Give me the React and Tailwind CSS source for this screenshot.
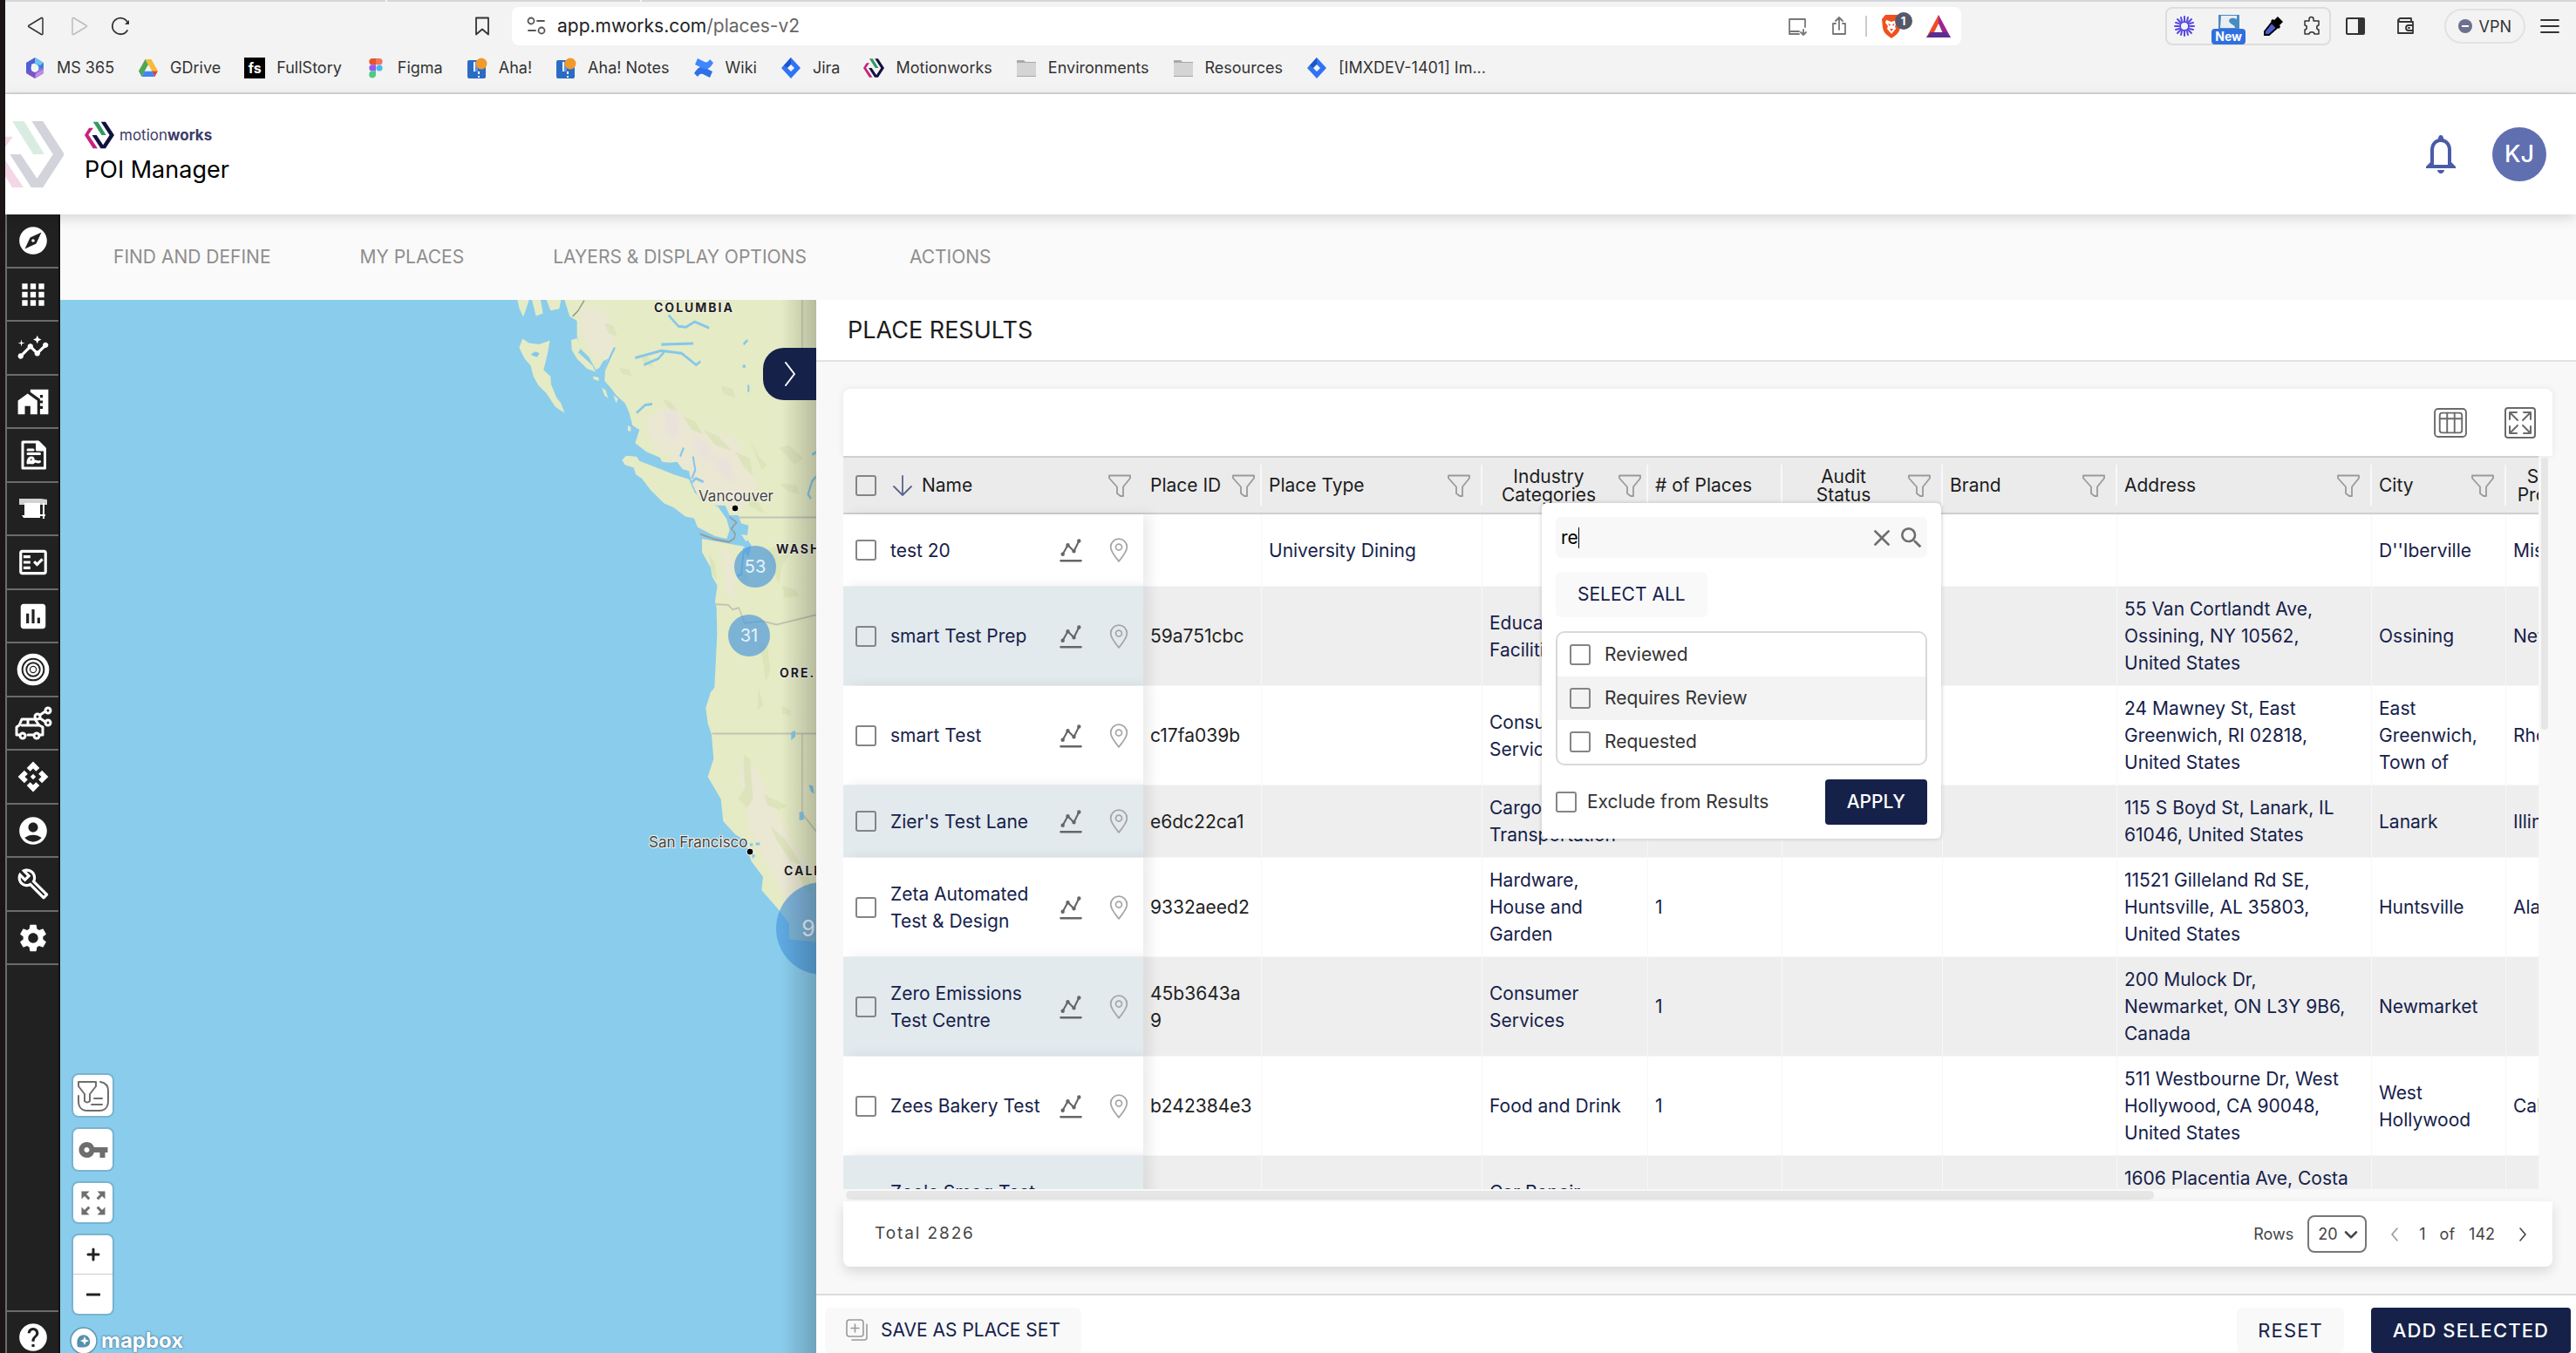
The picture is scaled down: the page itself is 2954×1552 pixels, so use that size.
import React from 'react'
import {
  MdExplore, MdApps, MdInsights, MdHomeWork, MdOutlineFactCheck, MdAssessment,
  MdApi, MdAccountCircle, MdOutlineBuild, MdSettings, MdHelp, MdVpnKey,
  MdSearch, MdClose, MdZoomOutMap,
} from 'react-icons/md'

const Logo = ({ className }) => (
  <svg viewBox="-27 418 248 224" className={className}>
    <path fill="#c8237c" d="M10 470h36L5 527l77 115H44L-27 530z" />
    <path fill="#339b62" d="M44 418h40l69 112h-38z" />
    <path fill="#121240" d="M110 418h38l73 112-73 112h-40L36 530h37l55 82 54-82z" />
  </svg>
)

const Ms365 = () => (
  <svg viewBox="0 0 24 24" className="size-6">
    <path fill="#3d7fe0" d="M12 0l10 6v6l-7 3V9l-5-3z" />
    <path fill="#6fc3f2" d="M12 0l10 6-4 3-8-3z" />
    <path fill="#7b52c8" d="M12 24L2 18l5-4 5 3 10-5v6z" />
    <path fill="#4f5fd6" d="M12 0L2 6v12l6-3V8l4-2z" />
    <path fill="#c08be8" d="M12 24l10-6v-5l-9 5z" />
    <circle cx="12" cy="12" r="4.5" fill="#f3f3f3" />
  </svg>
)

const Drive = () => (
  <svg viewBox="0 0 24 24" className="size-6">
    <path fill="#f5ba3a" d="M8.500 2h7L23 15.500h-7z" />
    <path fill="#e5432d" d="M16 15.500h7l-3.500 6.500z" />
    <path fill="#4fa653" d="M8.500 2L12 8.500 4.500 22 1 15.500z" />
    <path fill="#4285f4" d="M8 15.500h8.500L19.500 22h-15z" />
    <path fill="#f3f3f3" d="M12 8.500l4 7H8z" />
  </svg>
)

const FullStory = () => (
  <span className="grid size-6 place-items-center bg-black text-[16px] font-bold leading-none text-white">fs</span>
)

const FigmaIcon = () => (
  <svg viewBox="0 0 24 24" className="size-6">
    <path fill="#e8542a" d="M8 1h4v7.300H8A3.650 3.650 0 018 1z" />
    <path fill="#f0765f" d="M12 1h4a3.650 3.650 0 010 7.300h-4z" />
    <path fill="#9a58f2" d="M8 8.300h4v7.300H8a3.650 3.650 0 010-7.300z" />
    <circle cx="16" cy="12" r="3.600" fill="#45b8f5" />
    <path fill="#4ccb80" d="M8 15.600h4v4a3.900 3.900 0 11-4-4z" />
  </svg>
)

const Aha = () => (
  <svg viewBox="0 0 24 24" className="size-6">
    <rect x="1" y="3" width="21" height="21" rx="2" fill="#2a6cc4" />
    <path stroke="#fff" strokeWidth="2" d="M9 5v11M14 16v3M14 21v2" />
    <path fill="#5b95dc" d="M10 5h3v11h-3z" />
    <circle cx="17" cy="7" r="6.500" fill="#f09a2c" />
  </svg>
)

const Confluence = () => (
  <svg viewBox="0 0 24 24" className="size-6">
    <path fill="#2f6fe8" d="M1 18c4-7 8-9 13-6l8 4-3 7-8-4c-3-1-4 0-6 3z" />
    <path fill="#3f86ff" d="M23 6c-4 7-8 9-13 6L2 8l3-7 8 4c3 1 4 0 6-3z" />
  </svg>
)

const JiraIcon = () => (
  <svg viewBox="0 0 24 24" className="size-6">
    <path fill="#2f74f5" d="M12 0l11 12-11 12L1 12z" />
    <path fill="#1c55cc" d="M12 0v8l-4 4-4-3z" />
    <path fill="#f3f3f3" d="M12 8l4 4-4 4-4-4z" />
  </svg>
)

const Folder = () => (
  <svg viewBox="0 0 24 24" className="size-6">
    <path fill="#a9a9a9" d="M1 3h8l2 2h12v17H1z" />
    <rect x="1" y="6" width="22" height="15" rx="1" fill="#d4d4d4" />
  </svg>
)

const MotionIcon = () => <Logo className="h-6 w-6" />

const bookmarks = [
  ['MS 365', Ms365],
  ['GDrive', Drive],
  ['FullStory', FullStory],
  ['Figma', FigmaIcon],
  ['Aha!', Aha],
  ['Aha! Notes', Aha],
  ['Wiki', Confluence],
  ['Jira', JiraIcon],
  ['Motionworks', MotionIcon],
  ['Environments', Folder],
  ['Resources', Folder],
  ['[IMXDEV-1401] Im...', JiraIcon],
]

const Line = ({ className, children, vb = '0 0 24 24', w = 1.5 }) => (
  <svg viewBox={vb} className={className} fill="none" stroke="currentColor" strokeWidth={w} strokeLinecap="round" strokeLinejoin="round">
    {children}
  </svg>
)

const BrowserBar = () => (
  <div className="border-b-2 border-[#d6d6d6] bg-[#f3f3f3] text-[#333]">
    <div className="flex h-0.5">
      <div className="w-[436px] bg-[#d3d7dc]" />
      <div className="ml-0.5 w-[290px] bg-[#d3d7dc]" />
      <div className="ml-0.5 flex-1 bg-[#d3d7dc]" />
    </div>
    <div className="flex h-14 items-center pl-6 pr-[18px]">
      <button aria-label="Back"><Line className="size-6"><path d="M19 3.500v17a1 1 0 01-1.500 1L3.500 13a1 1 0 010-2L17.500 2.500a1 1 0 011.500 1z" /></Line></button>
      <button aria-label="Forward" className="ml-6 text-[#bdbdbd]"><Line className="size-6"><path d="M5 3.500v17a1 1 0 001.500 1L20.500 13a1 1 0 000-2L6.500 2.500a1 1 0 00-1.500 1z" /></Line></button>
      <button aria-label="Reload" className="ml-6">
        <Line className="size-6" w={1.8}><path d="M20 17a9.300 9.300 0 111-8" /><path d="M22 5v5h-5z" fill="currentColor" stroke="none" /></Line>
      </button>
      <button aria-label="Bookmark" className="ml-[391px]"><Line className="size-6" w={1.8}><path d="M5 2.500h14v19l-7-6-7 6z" /></Line></button>
      <div className="ml-[22px] flex h-[44px] flex-1 items-center rounded-lg bg-white pl-4 pr-3">
        <Line className="size-6 text-[#555]" w={1.8}><circle cx="6" cy="6" r="3.500" /><path d="M13 6h8M3 17h8" /><circle cx="18" cy="17" r="3.500" /></Line>
        <div className="ml-3 flex-1 text-[21px] text-[#222]">app.mworks.com<span className="text-[#666]">/places-v2</span></div>
        <div className="flex items-center text-[#777]">
          <button aria-label="Install"><Line className="size-6" w={1.8}><path d="M21 13V4H3v14h11M3 18v3h11M19 16v6M16 19l3 3 3-3" /></Line></button>
          <button aria-label="Share" className="ml-6"><Line className="size-6" w={1.8}><path d="M8 9H5v12h14V9h-3M12 16V2M8 6l4-4 4 4" /></Line></button>
          <div className="ml-[18px] h-6 w-0.5 bg-[#ccc]" />
          <button aria-label="Shields" className="relative ml-4 h-7 w-6">
            <svg viewBox="0 0 24 28" className="h-7 w-6">
              <path fill="#f0501e" d="M5 1h14l4 5-1 10c-1 6-6 9-10 12C8 25 3 22 2 16L1 6z" />
              <path fill="#fff" d="M6 7l6 2 6-2 1 3-3 4 1 3-5 6-5-6 1-3-3-4z" />
              <path fill="#f0501e" d="M8 11l3 1-1 2zM16 11l-3 1 1 2zM10 17h4l-2 3z" />
            </svg>
            <span className="absolute -right-3 -top-0.5 grid size-5 place-items-center rounded-full bg-[#55586a] text-[13px] font-bold leading-none text-white">1</span>
          </button>
          <button aria-label="Rewards" className="ml-7">
            <svg viewBox="0 0 28 26" className="h-7 w-7">
              <path fill="#f04a28" d="M14 0L0 26h6l8-16z" />
              <path fill="#a0238f" d="M14 0l14 26h-7L14 10z" />
              <path fill="#5a2d91" d="M0 26l5-6h18l5 6z" />
            </svg>
          </button>
        </div>
      </div>
      <div className="ml-[234px] flex h-[44px] w-[190px] items-center justify-between rounded-lg border-2 border-[#ddd] pl-2 pr-2">
        <svg viewBox="0 0 24 24" className="size-6" stroke="#5848e0" strokeWidth="2" strokeLinecap="round" fill="none">
          <circle cx="12" cy="12" r="5" />
          <path d="M12 1v5M12 18v5M1 12h5M18 12h5M4 4l4 4M16 16l4 4M20 4l-4 4M4 20l4-4M8 2l1 4M16 2l-1 4M8 22l1-4M16 22l-1-4M2 8l4 1M22 8l-4 1M2 16l4-1M22 16l-4-1" />
        </svg>
        <div className="mt-2 flex flex-col items-center">
          <svg viewBox="0 0 24 16" className="h-4 w-6"><path fill="#4a8cc0" d="M0 0h24v16H0z" /><path fill="#e9eef2" d="M3 1h18v4c-6-3-11 0-8 4 3 3 6 3 6 6H2z" /></svg>
          <span className="rounded-sm bg-[#2f6fdf] px-1 text-[14px] font-bold leading-[18px] text-white">New</span>
        </div>
        <svg viewBox="0 0 24 24" className="size-6"><path d="M17 1l6 6-4 4 1 2-2 2-9-9 2-2 2 1z" /><path stroke="#000" strokeWidth="2" fill="#4f5fd0" d="M10 8l6 6-9 8H2v-4z" /></svg>
        <Line className="size-6"><path d="M4 6h5V4a2.500 2.500 0 015 0v2h6v5c-3 0-3 5 0 5v5h-5c0-3-6-3-6 0H4v-5c3 0 3-5 0-5z" /></Line>
      </div>
      <button aria-label="Side panel" className="ml-4"><Line className="size-6" w={2}><rect x="2" y="3" width="20" height="18" rx="1" /><path d="M16 4h5v16h-5z" fill="currentColor" /></Line></button>
      <button aria-label="Wallet" className="ml-[34px]"><Line className="size-6" w={1.8}><path d="M3 5v15h17V7H5L3 5l2-2h13v4M20 11h-5a2.500 2.500 0 000 6h5zM15 14h1" /></Line></button>
      <button className="ml-8 flex h-10 items-center gap-2 rounded-full border-2 border-[#e2e2e2] px-3.5 text-[18px]">
        <svg viewBox="0 0 16 16" className="size-4"><circle cx="8" cy="8" r="8" fill="#6e7090" /><path d="M4 8h8" stroke="#fff" strokeWidth="2" /></svg>
        VPN
      </button>
      <button aria-label="Menu" className="ml-4"><Line className="size-6" w={1.8}><path d="M2 5h20M2 12h20M2 19h20" /></Line></button>
    </div>
    <div className="flex h-12 items-start gap-[27px] pl-[22px] pt-2">
      {bookmarks.map(([name, Icon]) => (
        <a key={name} href="#" className="flex items-center gap-[13px] text-[18px] leading-6">
          <Icon />
          {name}
        </a>
      ))}
    </div>
  </div>
)

const Header = () => (
  <header className="relative z-10 flex h-[138px] items-center bg-white shadow-[0_4px_14px_rgba(0,0,0,0.15)]">
    <div className="h-[76px] w-[67px] overflow-hidden opacity-[0.18]">
      <Logo className="-ml-4 h-[76px] w-[84px]" />
    </div>
    <div className="ml-6 pb-0.5">
      <div className="flex items-center gap-1.5">
        <Logo className="h-8 w-[34px]" />
        <span className="text-[17px] leading-8 text-[#3c3c68]">motion<b>works</b></span>
      </div>
      <h1 className="mt-1.5 text-[27px] leading-9 text-black">POI Manager</h1>
    </div>
    <button aria-label="Notifications" className="ml-auto text-[#4a5ca8]">
      <svg viewBox="0 0 36 44" className="h-[44px] w-9" fill="currentColor">
        <path d="M18 0c2 0 3 2 3 4 6 2 9 7 9 13v14l5 5v2H1v-2l5-5V17C6 11 9 6 15 4c0-2 1-4 3-4zm0 8c-5 0-8 4-8 9v17h16V17c0-5-3-9-8-9zM14 40h8c0 2-2 4-4 4s-4-2-4-4z" />
      </svg>
    </button>
    <div className="ml-[41px] mr-[34px] grid size-[62px] place-items-center rounded-full bg-[#5f6fb0] text-[27px] font-medium text-white">KJ</div>
  </header>
)

const ReportIcon = () => (
  <Line className="size-9" w={2}>
    <path d="M4 2h12l5 5v15H4z" /><path d="M15 2v6h6" fill="currentColor" /><path d="M8 8h4M8 11h9M8 18c0-5 5-5 4-2s-5 2-3 0c2 3 3 2 4 1s2 1 4 0" />
  </Line>
)
const BillboardIcon = () => (
  <svg viewBox="0 0 36 30" className="h-8 w-9" fill="currentColor">
    <path d="M2 3h25l7 1v6H2z" opacity="0.8" /><path d="M8 8h18v17H8z" /><path d="M29 8h2v18h-2zM5 22h4v3H7zM26 21h6v2h-6z" />
  </svg>
)
const TargetIcon = () => (
  <Line className="size-10" w={1.6}>
    <circle cx="12" cy="12" r="9.500" strokeWidth="3" /><circle cx="12" cy="12" r="6" /><circle cx="12" cy="12" r="3.300" /><circle cx="12" cy="12" r="1" fill="currentColor" />
  </Line>
)
const CarShareIcon = () => (
  <Line className="h-10 w-11" vb="0 0 44 40" w={3}>
    <path d="M3 33V24l3-2 3-7h15l5 7 4 2v9h-4M9 22h19M16 15v7M16 33h6M3 33h3" />
    <circle cx="10" cy="34" r="3" /><circle cx="26" cy="34" r="3" />
    <circle cx="27" cy="12" r="3" /><circle cx="39" cy="5" r="3" /><circle cx="39" cy="19" r="3" /><path d="M30 10l6-4M30 14l6 4" />
  </Line>
)

const sideItems = [
  ['Explore', MdExplore], ['Apps', MdApps], ['Insights', MdInsights], ['Places', MdHomeWork],
  ['Reports', ReportIcon], ['Billboards', BillboardIcon], ['Checks', MdOutlineFactCheck], ['Metrics', MdAssessment],
  ['Targets', TargetIcon], ['Traffic', CarShareIcon], ['API', MdApi], ['Account', MdAccountCircle],
  ['Tools', MdOutlineBuild], ['Settings', MdSettings],
]

const Sidebar = () => (
  <aside className="flex w-[63px] shrink-0 flex-col border-l-2 border-r-2 border-l-[#6b6b6b] border-r-[#111] bg-[#212121] text-white">
    <div className="flex h-[861px] flex-col">
      {sideItems.map(([name, Icon]) => (
        <button key={name} aria-label={name} className="grid flex-1 place-items-center border-b-2 border-[#6b6b6b] pt-px text-[38px]">
          <Icon />
        </button>
      ))}
    </div>
    <button aria-label="Help" className="mt-auto grid h-[49px] place-items-center border-t-2 border-[#6b6b6b] pt-2.5 text-[38px]">
      <MdHelp />
    </button>
  </aside>
)

const MapDrawing = () => (
  <svg viewBox="0 0 867 1208" preserveAspectRatio="xMaxYMin slice" className="absolute inset-0 h-full w-full" fontFamily="Inter, sans-serif">
    <defs>
      <linearGradient id="edge" x1="0" x2="1">
        <stop offset="0" stopOpacity="0" />
        <stop offset="1" stopOpacity="0.2" />
      </linearGradient>
      <filter id="soft"><feGaussianBlur stdDeviation="7" /></filter>
      <clipPath id="land"><path d="M262 8L280 45 305 55 305 90 320 120 345 135 370 165 382 160 395 145 412 140 402 165 400 190 420 205 440 222 470 240 485 262 496 290 520 300 505 330 545 350 590 362 600 375 650 372 668 388 690 392 700 418 720 448 760 470 815 470 830 492 860 492 870 510 895 515 890 545 905 560 895 585 880 575 880 562 820 555 735 545 735 575 765 610 770 630 788 650 780 685 785 700 787 760 778 880 765 890 748 925 755 960 768 985 775 1040 755 1080 800 1130 808 1180 850 1210 880 1222 888 1235 905 1270 945 1305 940 1335 1000 1380 1035 1410 1035 1445 1128 1452 1128 8z" /></clipPath>
    </defs>
    <rect width="867" height="1208" fill="#8accec" />
    <g transform="translate(491 -4) scale(0.3333 0.5102)">
      <g clipPath="url(#land)">
        <rect width="1140" height="1500" fill="#e5ebc5" />
        <g fill="#eae7d3" filter="url(#soft)">
          <path d="M320 20l80 10 40 60-30 60-60-20-40-60z" />
          <path d="M540 280l90-40 90 60 130 20 80 100-60 60-120-20-110-90-80-40z" />
          <path d="M800 560l40 20 10 110-30-20zM860 1050l60 10 110 150 60 60 30 150-60-20-90-110-70-90z" />
        </g>
        <g fill="#e9e1dc" filter="url(#soft)">
          <path d="M600 270l40-20 20 60-30 10zM700 310l50 20 30 40-60-10zM770 360l60 10 20 50-50-20z" />
        </g>
        <g fill="#dae2b6" opacity="0.8">
          <path d="M400 60l30 6 14 26-30-10zM450 160l34 4 10 16-34-6zM520 130l30 5 20 25-30-5zM600 230l30 8 20 20-34-8zM670 270l40 10 30 30-40-10zM740 300l50 14 50 34-60-14zM800 200l40 8 10 20-40-8zM850 350l50 14 10 40-30-20zM900 320l30 40 30 20-20 10zM1000 340l34-6 50 30-30 14zM880 440l40 14 30 34-50-16zM1000 420l60 4 10 20-40-6zM960 570l50-14 40 10-40 40-10 40-20-30zM1010 650l50 10 10 14-50 4zM930 780l30 4 10 60-16 20-10-50zM870 620l20 6 6 20-20-4zM930 880l16 40-20 10zM1010 920l30 10v14l-30-8zM880 1030l20 10 10 90-20 20-30-20 24-26-6-40zM950 1120l80 26-30 8-40-10zM970 1190l50 30 60 60-40-10-50-50zM1060 1290l40 14 20 40-30-10zM760 580l20 20 6 40-20-20z" />
        </g>
        <g fill="none" stroke="#c4c4b4" strokeWidth="4">
          <path d="M860 497h268M770 983h358M1080 8v170M1080 983v180l48 40M780 692l46 2 14 10 22-4 20 35 60-5 50 8 136-22" />
        </g>
        <g fill="none" stroke="#84c7ea" strokeWidth="6">
          <path d="M620 42l34 25 26 2 30-12 50 14M505 138l90-16 70 6 50 26 15-8M535 154l50-14 20-15M595 108l110-2M510 262l30-18 24-2M530 365l50 8 60 6M400 165l20-30 15-20M660 360l12-20M700 410l12-20-8-30M895 215v-16M875 157h10M878 108l14-10M1128 405l-14 10-14 30 10 10M1128 350l-14 6M690 425l24-16 26 8M880 565l-10 60-14 4" />
        </g>
        <path fill="#84c7ea" d="M1042 980l14-4v14l-14 8zM1070 1160l14-2 2 18-16 2zM1102 1098l14 2 6 18-12-4zM900 1230h10v6h-10zM920 1228h14v6h-14zM905 1250l14 8-10 6z" />
      </g>
      <g fill="#e5ebc5">
        <path d="M106 115L118 95 140 105 175 108 212 99 204 127 196 150 190 165 214 180 216 198 235 228 250 240 262 262 230 248 200 218 172 200 155 180 145 155 125 140z" />
        <path d="M460 368l14-10 36 2 10 10 60 15 60 16 50 10 20 30 30 20 50 12 30 28 10 24-10 20-40-6-60-20-12-20-30-4-40-20-34-10-46-30-30-26-20-8-8-16-30-6z" />
        <path d="M100 8h40l-10 20-10 18-14-20zM150 8h30l8 30-24 6-8-20zM200 8h50l-6 20-30 4zM285 98l20-4 16 20-12 12 50 30 10 14-30-8-34-22-18-20zM390 205l14 6 8 18-12-6zM360 180l20 2v8l-18-4zM430 222l16 8-6 10zM480 290l10 4v10l-10-2zM870 535l22 2 6 10-12 4z" />
      </g>
      <path fill="#84c7ea" d="M146 130l16-6 14 4-8 8-14-2z" />
      <g fill="none" stroke="#9a9a96" strokeWidth="4">
        <path d="M290 45l18-12 22-24M728 534l50 12 50 6 18-8 4-10-14-12 18-14-24-12" />
      </g>
    </g>
    <g fill="#4a98dc" fillOpacity="0.68">
      <circle cx="797" cy="306" r="24" />
      <circle cx="790" cy="385" r="24" />
      <circle cx="874" cy="721" r="53" />
    </g>
    <g fill="#e8f2fa" textAnchor="middle" fontSize="20">
      <text x="797" y="313">53</text>
      <text x="790" y="392">31</text>
      <text x="858" y="730" fontSize="25">9</text>
    </g>
    <g fill="#222" stroke="#f4f4ec" strokeWidth="2" paintOrder="stroke" fontSize="14" fontWeight="700" letterSpacing="2">
      <text x="681" y="14">COLUMBIA</text>
      <text x="821" y="291">WASH</text>
      <text x="825" y="433">ORE.</text>
      <text x="830" y="660">CALI</text>
    </g>
    <g fill="#444" stroke="#f4f4ec" strokeWidth="2" paintOrder="stroke" fontSize="17">
      <text x="732" y="231">Vancouver</text>
      <text x="675" y="628">San Francisco</text>
    </g>
    <g fill="#000" stroke="#fff">
      <circle cx="774" cy="239" r="4" />
      <circle cx="791" cy="633" r="4" />
    </g>
    <rect x="827" width="40" height="1208" fill="url(#edge)" />
  </svg>
)

const mapButton = 'grid w-[45px] place-items-center rounded-md bg-white shadow-[0_0_0_2px_rgba(0,0,0,0.12)]'

const MapPane = () => (
  <section className="relative w-[867px] shrink-0 overflow-hidden">
    <MapDrawing />
    <button aria-label="Collapse results" className="absolute right-0 top-[55px] grid h-[60px] w-[61px] place-items-center rounded-l-3xl bg-[#16214a] text-white">
      <Line className="h-7 w-3" vb="0 0 12 28" w={2}><path d="M1 1l10 13L1 27" /></Line>
    </button>
    <div className="absolute bottom-[45px] left-[15px] flex flex-col gap-[15px] text-[#6e6e6e]">
      <button aria-label="Filter layers" className={mapButton + ' h-[47px]'}>
        <Line className="size-9" vb="0 0 36 36" w={2}><path d="M1 2h20v5l-7 9v8c-2 2-4 2-6 0v-8L1 7zM26 2c6 1 9 5 9 10v12c0 7-4 11-10 11H11C5 35 1 31 1 24v-6M19 21h9M16 28h12" /></Line>
      </button>
      <button aria-label="Legend" className={mapButton + ' h-[47px] text-[36px]'}><MdVpnKey /></button>
      <button aria-label="Fit map" className={mapButton + ' h-[45px] text-[36px]'}><MdZoomOutMap /></button>
      <div className={mapButton + ' text-[#222]'}>
        <button aria-label="Zoom in" className="grid h-[45px] w-full place-items-center border-b border-[#ccc]"><Line className="size-4" vb="0 0 16 16" w={3}><path d="M8 2v12M2 8h12" /></Line></button>
        <button aria-label="Zoom out" className="grid h-[45px] w-full place-items-center"><Line className="size-4" vb="0 0 16 16" w={3}><path d="M1 8h14" /></Line></button>
      </div>
    </div>
    <a href="#" className="absolute -bottom-0.5 left-[11px] flex items-center gap-1 text-[24px] font-bold leading-8 text-white [text-shadow:0_0_3px_#4a7f9c,0_0_2px_#4a7f9c]">
      <svg viewBox="0 0 32 32" className="size-8">
        <circle cx="16" cy="16" r="15" fill="#fff" stroke="#5d98b8" strokeWidth="1.500" />
        <path fill="#5590ae" d="M9 23c-1-5-1-9 2-12a7.500 7.500 0 0111 10c-3 3-8 3-13 2z" />
        <path fill="#fff" d="M17 11l1.500 3.500L22 16l-3.500 1.500L17 21l-1.500-3.500L12 16l3.500-1.500z" />
      </svg>
      mapbox
    </a>
  </section>
)

const FilterButton = ({ label }) => (
  <button aria-label={`Filter ${label}`} className="shrink-0 text-[#9a9a9a]">
    <Line className="size-[26px]" vb="0 0 26 26" w={1.8}><path d="M1 1.500h24v3l-8 10V25h-3l-4-3v-7.500L1 4.500z" /></Line>
  </button>
)

const Checkbox = ({ label }) => (
  <input type="checkbox" aria-label={label} className="size-6 shrink-0 appearance-none rounded-[3px] border-2 border-[#858585]" />
)

const AuditFilter = () => (
  <div className="absolute right-0.5 top-[52px] z-20 w-[458px] rounded-md bg-white p-4 text-left text-[21px] leading-6 text-[#333] shadow-[0_0_5px_rgba(0,0,0,0.2)]">
    <div className="flex h-[47px] items-center rounded-md bg-[#f8f8f8] pl-1.5 pr-0.5 text-[#6e6e6e]">
      <input aria-label="Search statuses" defaultValue="re" className="field-sizing-content text-black outline-none" />
      <span className="h-6 w-px bg-black" />
      <button aria-label="Clear" className="ml-auto text-[32px]"><MdClose /></button>
      <button aria-label="Search" className="ml-0.5 text-[32px]"><MdSearch /></button>
    </div>
    <button className="mt-4 h-[52px] rounded-md bg-[#f9f9f9] px-[25px] text-[#16214a]">SELECT ALL</button>
    <div className="mt-4 overflow-hidden rounded-[10px] border-2 border-[#d9d9d9]">
      {['Reviewed', 'Requires Review', 'Requested'].map((s) => (
        <label key={s} className="flex h-[50px] items-center gap-4 px-3.5 even:bg-[#f3f3f3]">
          <Checkbox />
          {s}
        </label>
      ))}
    </div>
    <div className="mt-4 flex items-center justify-between">
      <label className="flex items-center gap-3">
        <Checkbox />
        Exclude from Results
      </label>
      <button className="h-[52px] rounded-[4px] bg-[#16214a] px-[25px] font-medium text-white">APPLY</button>
    </div>
  </div>
)

const columns = [
  { name: 'Place ID', width: 'w-[136px]', filter: true, narrow: true },
  { name: 'Place Type', width: 'w-[253px]', filter: true },
  { name: 'Industry\nCategories', width: 'w-[190px]', filter: true, wrap: true, narrow: true },
  { name: '# of Places', width: 'w-[154px]' },
  { name: 'Audit\nStatus', width: 'w-[184px]', filter: true, wrap: true, open: true },
  { name: 'Brand', width: 'w-[200px]', filter: true },
  { name: 'Address', width: 'w-[292px]', filter: true },
  { name: 'City', width: 'w-[154px]', filter: true },
  { name: 'State /\nProvince', width: 'w-[156px]', filter: true, wrap: true },
]

// name, place id, type, industry, count, audit, brand, address, city, state
const rows = [
  ['test 20', '', 'University Dining', '', '', '', '', '', "D''Iberville", 'Mississippi'],
  ['smart Test Prep', '59a751cbc', '', 'Educational Facilities', '', '', '', '55 Van Cortlandt Ave, Ossining, NY 10562, United States', 'Ossining', 'New York'],
  ['smart Test', 'c17fa039b', '', 'Consumer Services', '', '', '', '24 Mawney St, East Greenwich, RI 02818, United States', 'East Greenwich, Town of', 'Rhode Island'],
  ["Zier's Test Lane", 'e6dc22ca1', '', 'Cargo and Transportation', '', '', '', '115 S Boyd St, Lanark, IL 61046, United States', 'Lanark', 'Illinois'],
  ['Zeta Automated Test & Design', '9332aeed2', '', 'Hardware, House and Garden', '1', '', '', '11521 Gilleland Rd SE, Huntsville, AL 35803, United States', 'Huntsville', 'Alabama'],
  ['Zero Emissions Test Centre', '45b3643a\n9', '', 'Consumer Services', '1', '', '', '200 Mulock Dr,\nNewmarket, ON L3Y 9B6, Canada', 'Newmarket', ''],
  ['Zees Bakery Test', 'b242384e3', '', 'Food and Drink', '1', '', '', '511 Westbourne Dr, West Hollywood, CA 90048, United States', 'West Hollywood', 'California'],
  ["Zee's Smog Test Only", '', '', 'Car Repair Services', '', '', '', '1606 Placentia Ave, Costa Mesa, CA 92627, United States', '', ''],
]

const ResultsTable = () => (
  <table className="w-[2063px] table-fixed border-separate border-spacing-0 text-left text-[21px]">
    <thead>
      <tr className="h-[67px] bg-[#ebebeb] text-[#1c1c1c]">
        <th className="w-[344px] border-y-2 border-[#cfcfcf] px-3.5 font-normal">
          <div className="flex items-center">
            <Checkbox label="Select all" />
            <Line className="ml-[18px] size-6 text-[#5c6488]" w={1.8}><path d="M12 1v22M2 13l10 10 10-10" /></Line>
            <span className="ml-2.5">Name</span>
            <span className="ml-auto flex"><FilterButton label="Name" /></span>
          </div>
        </th>
        {columns.map((c) => (
          <th key={c.name} className={'relative border-y-2 border-[#cfcfcf] pl-2 font-normal ' + c.width + (c.narrow ? ' pr-2' : ' pr-3.5')}>
            <div className="flex items-center justify-between">
              <span className={c.wrap ? 'flex-1 whitespace-pre-line pr-3 text-center leading-[21px]' : 'whitespace-nowrap'}>{c.name}</span>
              {c.filter && <FilterButton label={c.name} />}
            </div>
            <span className="absolute inset-y-2 right-0 w-0.5 bg-[#f8f8f8]" />
            {c.open && <AuditFilter />}
          </th>
        ))}
      </tr>
    </thead>
    <tbody className="text-[#16214a]">
      {rows.map(([name, ...cells]) => (
        <tr key={name} className="group h-[83px] bg-white leading-[31px] even:bg-[#eee]">
          <td className="relative border-b border-[#f3f3f3] bg-white px-3.5 py-2.5 shadow-[8px_0_14px_rgba(0,0,0,0.08)] group-even:bg-[#e2eaee]">
            <div className="flex items-center">
              <Checkbox label={`Select ${name}`} />
              <span className="ml-4 w-[184px]">{name}</span>
              <button aria-label="Chart" className="ml-2.5 text-[#666]">
                <Line className="size-7" w={1.8}><path d="M4 16l5-9 6 6 5-10" /><path d="M2 22.500h20" strokeWidth="2" /><g fill="currentColor"><circle cx="4" cy="16" r="1" /><circle cx="9" cy="7" r="1" /><circle cx="15" cy="13" r="1" /><circle cx="20" cy="3" r="1" /></g></Line>
              </button>
              <button aria-label="Locate" className="ml-[27px] text-[#a5a5a5]">
                <Line className="size-7" w={1.5}><path d="M12 23C7 17 4 13 4 9a8 8 0 0116 0c0 4-3 8-8 14z" /><circle cx="12" cy="9" r="3" /></Line>
              </button>
            </div>
          </td>
          {cells.map((cell, i) => (
            <td key={i} className={'whitespace-pre-line border-b border-r border-[#f7f7f7] py-2.5 pl-2 ' + (i === 0 ? 'pr-1 text-[#222]' : 'pr-4')}>{cell}</td>
          ))}
        </tr>
      ))}
    </tbody>
  </table>
)

const ResultsPanel = () => (
  <section className="relative flex min-w-0 flex-1 flex-col bg-[#f8f8f8]">
    <h2 className="flex h-[71px] shrink-0 items-center border-b-2 border-[#e2e2e2] bg-white pl-9 pt-0.5 text-[27px] text-[#1c1c1c]">PLACE RESULTS</h2>
    <div className="flex min-h-0 flex-1 flex-col pb-[31px] pl-[31px] pr-[27px] pt-[31px]">
      <div className="flex h-[77px] shrink-0 items-center justify-end gap-[43px] rounded-t-lg bg-white pr-[19px] text-[#6a6a6a] shadow-[0_0_8px_rgba(0,0,0,0.08)]">
        <button aria-label="Columns">
          <Line className="h-[34px] w-[38px]" vb="0 0 40 36" w={2}><rect x="1" y="1" width="38" height="34" rx="4" /><rect x="7" y="6" width="27" height="24" rx="3" /><path d="M7 13h27M16 6v24M25 6v24" /></Line>
        </button>
        <button aria-label="Expand">
          <Line className="size-9" vb="0 0 36 36" w={2}><rect x="1" y="1" width="34" height="34" rx="3" /><path d="M6 14V6h8M6 6l9 9M22 6h8v8M30 6l-9 9M6 22v8h8M6 30l9-9M30 22v8h-8M30 30l-9-9" /></Line>
        </button>
      </div>
      <div className="flex min-h-0 flex-1">
        <div className="min-w-0 flex-1 overflow-hidden">
          <ResultsTable />
        </div>
        <div className="w-4 shrink-0 pl-[3px] pt-0.5">
          <div className="h-[312px] w-2 rounded-full bg-[#e6e6e6]" />
        </div>
      </div>
      <div className="h-3.5 shrink-0 pl-[3px] pt-0.5">
        <div className="h-2.5 w-23/30 rounded-full bg-[#e6e6e6]" />
      </div>
      <div className="flex h-[75px] shrink-0 items-center rounded-b-lg bg-white pl-9 pr-[30px] text-[18px] text-[#444] shadow-[0_6px_14px_rgba(0,0,0,0.12)]">
        <span className="text-[19px] tracking-widest">Total 2826</span>
        <label htmlFor="rows" className="ml-auto">Rows</label>
        <div className="relative ml-4">
          <select id="rows" className="h-[43px] w-[68px] appearance-none rounded-lg border-2 border-[#777] pl-2.5">
            <option>20</option>
          </select>
          <Line className="pointer-events-none absolute right-2.5 top-3.5 size-4" w={4}><path d="M3 8l9 9 9-9" /></Line>
        </div>
        <button aria-label="Previous page" className="ml-7 text-[#999]"><Line className="h-4 w-2" vb="0 0 8 16" w={1.6}><path d="M7 1L1 8l6 7" /></Line></button>
        <span className="ml-6">1</span>
        <span className="ml-4">of</span>
        <span className="ml-4">142</span>
        <button aria-label="Next page" className="ml-7"><Line className="h-4 w-2" vb="0 0 8 16" w={1.6}><path d="M1 1l6 7-6 7" /></Line></button>
      </div>
    </div>
    <div className="flex h-[68px] shrink-0 items-center border-t-2 border-[#dcdcdc] bg-white pl-2.5 pr-1.5 pt-3.5 text-[21px] text-[#16214a]">
      <button className="flex h-[52px] items-center gap-[14px] rounded-md bg-[#f9f9f9] px-6">
        <Line className="size-[26px] text-[#999]" vb="0 0 26 26" w={1.6}><rect x="1" y="1" width="19" height="19" rx="3" /><path d="M10.500 6v9M6 10.500h9M24 6v15a3 3 0 01-3 3H7" /></Line>
        SAVE AS PLACE SET
      </button>
      <button className="ml-auto h-[52px] rounded-md bg-[#f9f9f9] px-6 text-[22px] tracking-wider">RESET</button>
      <button className="ml-[31px] h-[52px] rounded-[4px] bg-[#16214a] px-[25px] text-[22px] font-medium tracking-wider text-white">ADD SELECTED</button>
    </div>
  </section>
)

const App = () => {
  return (
    <div className="flex h-screen flex-col overflow-hidden border-l-[6px] border-[#1b1516] bg-white font-['Inter',sans-serif]">
      <BrowserBar />
      <Header />
      <div className="flex min-h-0 flex-1">
        <Sidebar />
        <main className="flex min-w-0 flex-1 flex-col">
          <nav className="flex h-[98px] shrink-0 items-center gap-[102px] bg-[#fafafa] pl-[61px] text-[21px] text-[#8e8e8e]">
            <a href="#">FIND AND DEFINE</a>
            <a href="#">MY PLACES</a>
            <a href="#">LAYERS &amp; DISPLAY OPTIONS</a>
            <a href="#" className="ml-4">ACTIONS</a>
          </nav>
          <div className="flex min-h-0 flex-1">
            <MapPane />
            <ResultsPanel />
          </div>
        </main>
      </div>
    </div>
  )
}

export default App
